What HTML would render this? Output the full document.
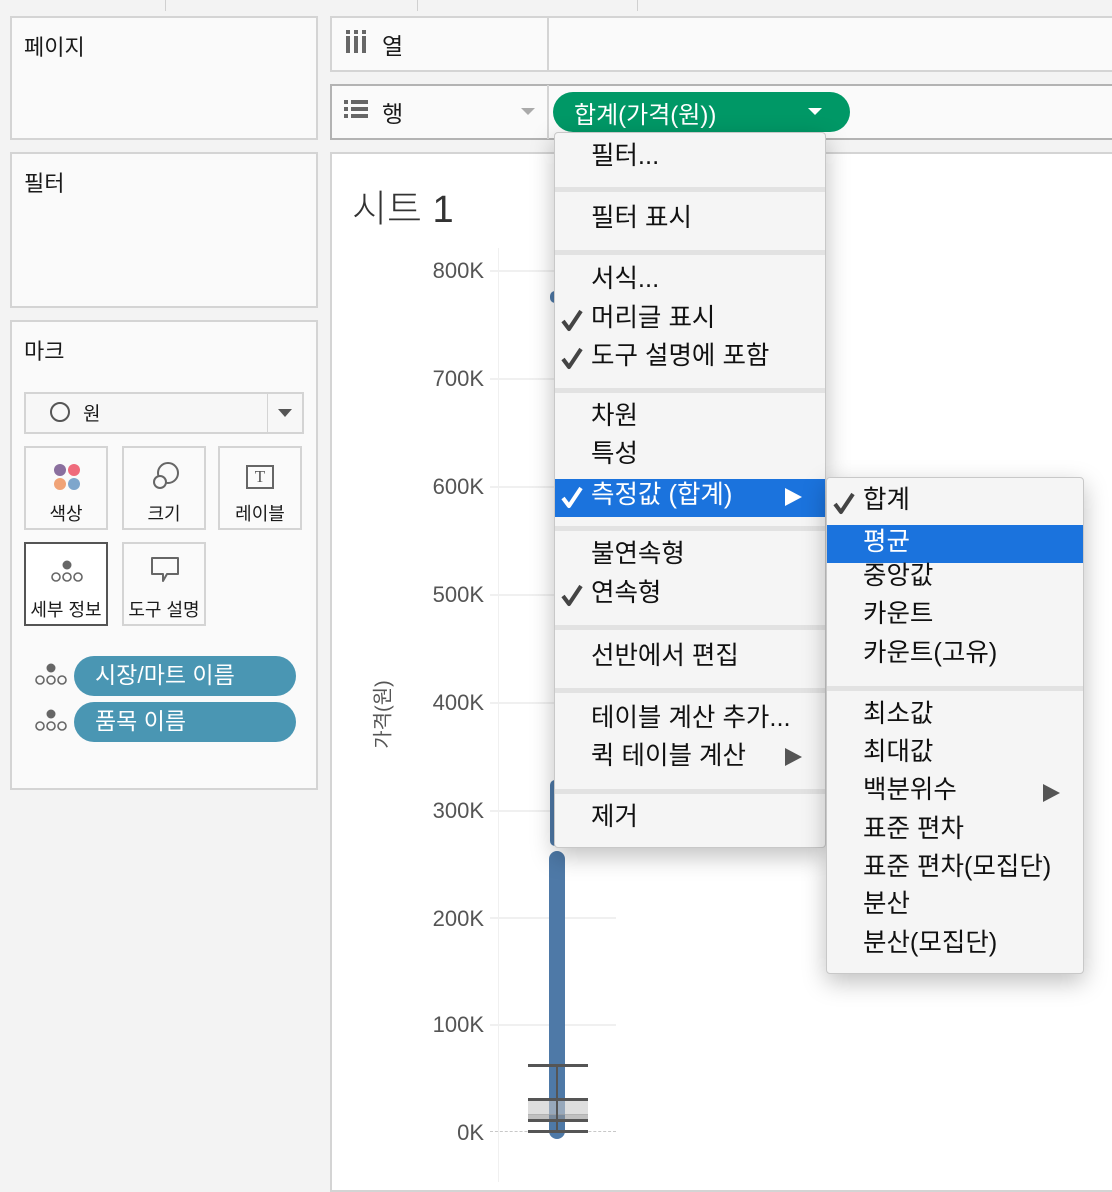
<!DOCTYPE html>
<html><head><meta charset="utf-8"><style>
*{margin:0;padding:0;box-sizing:border-box}
body{width:1112px;height:1182px;background:#f3f3f3;position:relative;overflow:hidden;font-family:"Liberation Sans","Noto Sans CJK KR",sans-serif;color:#1a1a1a}
.a{position:absolute}
.panel{position:absolute;background:#fafafa;border:2px solid #d4d4d4}
.t{position:absolute;white-space:nowrap}
.mi{position:absolute;left:36px;height:38px;line-height:38px;font-size:25.5px;white-space:nowrap;color:#111}
.ck{position:absolute;left:5px;width:24px;height:26px}
.sep{position:absolute;left:0;right:0;height:5px;background:#e2e2e2}
.ax{position:absolute;width:84px;text-align:right;left:400px;font-size:22px;color:#555;height:24px;line-height:24px}
.gl{position:absolute;left:490px;width:126px;height:2px;background:#f0f0f0}
.card{position:absolute;width:84px;height:84px;border:2px solid #d4d4d4;background:#fafafa;text-align:center;font-size:18px}
.card span{position:absolute;left:0;right:0;top:52px}
.pill{position:absolute;left:74px;width:222px;height:40px;border-radius:20px;background:#4a96b3;color:#fff;font-size:23px;line-height:38px;padding-left:21px}
</style></head><body>
<div class="a" style="left:165px;top:0;width:1px;height:11px;background:#d0d0d0"></div>
<div class="a" style="left:417px;top:0;width:1px;height:11px;background:#d0d0d0"></div>
<div class="a" style="left:637px;top:0;width:1px;height:11px;background:#d0d0d0"></div>

<div class="panel" style="left:10px;top:16px;width:308px;height:124px"></div>
<div class="t" style="left:24px;top:30px;font-size:22px">페이지</div>
<div class="panel" style="left:10px;top:152px;width:308px;height:156px"></div>
<div class="t" style="left:24px;top:166px;font-size:22px">필터</div>
<div class="panel" style="left:10px;top:320px;width:308px;height:470px"></div>
<div class="t" style="left:24px;top:334px;font-size:22px">마크</div>
<div class="a" style="left:24px;top:392px;width:280px;height:42px;border:2px solid #d4d4d4;background:#f7f7f7"></div>
<div class="a" style="left:267px;top:394px;width:1px;height:38px;background:#d4d4d4"></div>
<div class="a" style="left:50px;top:402px;width:20px;height:20px;border:2px solid #555;border-radius:50%"></div>
<div class="t" style="left:83px;top:399px;font-size:19px">원</div>
<div class="a" style="left:278px;top:409px;border-left:7px solid transparent;border-right:7px solid transparent;border-top:8px solid #555"></div>

<div class="card" style="left:24px;top:446px">
<div class="a" style="left:28px;top:16px;width:12px;height:12px;border-radius:50%;background:#8a6f9e"></div>
<div class="a" style="left:42px;top:16px;width:12px;height:12px;border-radius:50%;background:#ef6b7c"></div>
<div class="a" style="left:28px;top:30px;width:12px;height:12px;border-radius:50%;background:#f0a377"></div>
<div class="a" style="left:42px;top:30px;width:12px;height:12px;border-radius:50%;background:#7ea6cc"></div>
<span>색상</span></div>
<div class="card" style="left:122px;top:446px">
<svg class="a" style="left:26px;top:12px" width="32" height="32"><circle cx="18" cy="13" r="10" fill="none" stroke="#666" stroke-width="2"/><circle cx="10" cy="22" r="6" fill="#fafafa" stroke="#666" stroke-width="2"/></svg>
<span>크기</span></div>
<div class="card" style="left:218px;top:446px">
<div class="a" style="left:26px;top:17px;width:28px;height:24px;border:2px solid #666;font-family:'Liberation Serif',serif;font-size:17px;line-height:19px;color:#555">T</div>
<span>레이블</span></div>
<div class="card" style="left:24px;top:542px;border-color:#555;background:#fff">
<svg class="a" style="left:24px;top:16px" width="34" height="24"><circle cx="17" cy="5" r="4.5" fill="#666"/><circle cx="6" cy="17" r="4" fill="none" stroke="#666" stroke-width="1.6"/><circle cx="17" cy="17" r="4" fill="none" stroke="#666" stroke-width="1.6"/><circle cx="28" cy="17" r="4" fill="none" stroke="#666" stroke-width="1.6"/></svg>
<span>세부 정보</span></div>
<div class="card" style="left:122px;top:542px">
<svg class="a" style="left:26px;top:12px" width="32" height="30"><path d="M2 2H28V18H17L13 25V18H2Z" fill="none" stroke="#666" stroke-width="2" stroke-linejoin="round"/></svg>
<span>도구 설명</span></div>

<svg class="a" style="left:34px;top:663px" width="34" height="24"><circle cx="17" cy="5" r="4.5" fill="#666"/><circle cx="6" cy="17" r="4" fill="none" stroke="#666" stroke-width="1.6"/><circle cx="17" cy="17" r="4" fill="none" stroke="#666" stroke-width="1.6"/><circle cx="28" cy="17" r="4" fill="none" stroke="#666" stroke-width="1.6"/></svg>
<div class="pill" style="top:656px">시장/마트 이름</div>
<svg class="a" style="left:34px;top:709px" width="34" height="24"><circle cx="17" cy="5" r="4.5" fill="#666"/><circle cx="6" cy="17" r="4" fill="none" stroke="#666" stroke-width="1.6"/><circle cx="17" cy="17" r="4" fill="none" stroke="#666" stroke-width="1.6"/><circle cx="28" cy="17" r="4" fill="none" stroke="#666" stroke-width="1.6"/></svg>
<div class="pill" style="top:702px">품목 이름</div>

<div class="a" style="left:330px;top:16px;width:790px;height:56px;background:#fafafa;border:2px solid #d4d4d4"></div>
<div class="a" style="left:547px;top:17px;width:2px;height:54px;background:#d4d4d4"></div>
<svg class="a" style="left:345px;top:30px" width="24" height="24"><g fill="#666"><rect x="1" y="0" width="4" height="4"/><rect x="9" y="0" width="4" height="4"/><rect x="17" y="0" width="4" height="4"/><rect x="1" y="6" width="4" height="17"/><rect x="9" y="6" width="4" height="17"/><rect x="17" y="6" width="4" height="17"/></g></svg>
<div class="t" style="left:382px;top:27px;font-size:23px">열</div>

<div class="a" style="left:330px;top:84px;width:790px;height:56px;background:#fafafa;border:2px solid #b3b3b3"></div>
<div class="a" style="left:547px;top:85px;width:2px;height:54px;background:#d4d4d4"></div>
<svg class="a" style="left:344px;top:99px" width="26" height="22"><g fill="#666"><rect x="0" y="1" width="4" height="4"/><rect x="7" y="1" width="17" height="4"/><rect x="0" y="8" width="4" height="4"/><rect x="7" y="8" width="17" height="4"/><rect x="0" y="15" width="4" height="4"/><rect x="7" y="15" width="17" height="4"/></g></svg>
<div class="t" style="left:382px;top:95px;font-size:23px">행</div>
<div class="a" style="left:521px;top:108px;border-left:7px solid transparent;border-right:7px solid transparent;border-top:7px solid #aaa"></div>
<div class="a" style="left:553px;top:92px;width:297px;height:40px;border-radius:20px;background:#009866"></div>
<div class="t" style="left:574px;top:95px;font-size:24px;color:#fff">합계(가격(원))</div>
<div class="a" style="left:808px;top:108px;border-left:7px solid transparent;border-right:7px solid transparent;border-top:7px solid #fff"></div>

<div class="a" style="left:330px;top:152px;width:790px;height:1040px;background:#fff;border:2px solid #d4d4d4"></div>
<div class="t" style="left:352px;top:178px;font-size:38px;color:#333;font-weight:300">시트 1</div>
<div class="a" style="left:498px;top:248px;width:1px;height:934px;background:#f0f0f0"></div>
<div class="gl" style="top:270px"></div><div class="gl" style="top:378px"></div><div class="gl" style="top:486px"></div><div class="gl" style="top:594px"></div><div class="gl" style="top:702px"></div><div class="gl" style="top:810px"></div><div class="gl" style="top:917px"></div><div class="gl" style="top:1024px"></div>
<div class="a" style="left:490px;top:1131px;width:126px;border-top:1px dashed #c8c8c8"></div>
<div class="ax" style="top:259px">800K</div><div class="ax" style="top:367px">700K</div><div class="ax" style="top:475px">600K</div><div class="ax" style="top:583px">500K</div><div class="ax" style="top:691px">400K</div><div class="ax" style="top:799px">300K</div><div class="ax" style="top:907px">200K</div><div class="ax" style="top:1013px">100K</div><div class="ax" style="top:1121px">0K</div>
<div class="t" style="left:346px;top:700px;width:70px;font-size:20px;color:#555;transform:rotate(-90deg);text-align:center">가격(원)</div>
<div class="a" style="left:549px;top:851px;width:16px;height:288px;border-radius:8px;background:#4e79a7"></div>
<div class="a" style="left:550px;top:780px;width:10px;height:66px;border-radius:6px;background:#4e79a7"></div>
<div class="a" style="left:550px;top:291px;width:10px;height:12px;border-radius:6px;background:#4e79a7"></div>
<div class="a" style="left:528px;top:1099px;width:60px;height:16px;background:rgba(200,200,200,0.6)"></div>
<div class="a" style="left:528px;top:1114px;width:60px;height:6px;background:rgba(150,150,150,0.6)"></div>
<div class="a" style="left:528px;top:1064px;width:60px;height:3px;background:#555"></div>
<div class="a" style="left:528px;top:1098px;width:60px;height:3px;background:#555"></div>
<div class="a" style="left:528px;top:1119px;width:60px;height:3px;background:#555"></div>
<div class="a" style="left:528px;top:1130px;width:60px;height:3px;background:#555"></div>
<div class="a" style="left:556px;top:1066px;width:2px;height:66px;background:#555"></div>

<div class="a" style="left:554px;top:132px;width:272px;height:716px;background:#f5f5f5;border:1px solid #c8c8c8;border-radius:4px;box-shadow:0 8px 24px rgba(0,0,0,0.25)">
<div class="mi" style="top:4px">필터...</div>
<div class="sep" style="top:54px"></div>
<div class="mi" style="top:66px">필터 표시</div>
<div class="sep" style="top:117px"></div>
<div class="mi" style="top:127px">서식...</div>
<svg class="ck" style="top:174px"><path d="M3 14L9 22L21 4" fill="none" stroke="#444" stroke-width="4" stroke-linejoin="round"/></svg><div class="mi" style="top:166px">머리글 표시</div>
<svg class="ck" style="top:212px"><path d="M3 14L9 22L21 4" fill="none" stroke="#444" stroke-width="4" stroke-linejoin="round"/></svg><div class="mi" style="top:204px">도구 설명에 포함</div>
<div class="sep" style="top:255px"></div>
<div class="mi" style="top:264px">차원</div>
<div class="mi" style="top:302px">특성</div>
<div class="a" style="left:0;right:0;top:346px;height:38px;background:#1b73dd"></div>
<svg class="ck" style="top:351px"><path d="M3 14L9 22L21 4" fill="none" stroke="#fff" stroke-width="4" stroke-linejoin="round"/></svg><div class="mi" style="top:343px;color:#fff">측정값 (합계)</div>
<div class="a" style="left:230px;top:355px;border-top:9px solid transparent;border-bottom:9px solid transparent;border-left:17px solid #fff"></div>
<div class="sep" style="top:393px"></div>
<div class="mi" style="top:402px">불연속형</div>
<svg class="ck" style="top:449px"><path d="M3 14L9 22L21 4" fill="none" stroke="#444" stroke-width="4" stroke-linejoin="round"/></svg><div class="mi" style="top:441px">연속형</div>
<div class="sep" style="top:492px"></div>
<div class="mi" style="top:504px">선반에서 편집</div>
<div class="sep" style="top:555px"></div>
<div class="mi" style="top:566px">테이블 계산 추가...</div>
<div class="mi" style="top:604px">퀵 테이블 계산</div>
<div class="a" style="left:230px;top:615px;border-top:9px solid transparent;border-bottom:9px solid transparent;border-left:17px solid #555"></div>
<div class="sep" style="top:656px"></div>
<div class="mi" style="top:665px">제거</div>
</div>

<div class="a" style="left:826px;top:477px;width:258px;height:497px;background:#f5f5f5;border:1px solid #c8c8c8;border-radius:4px;box-shadow:0 8px 24px rgba(0,0,0,0.25)">
<svg class="ck" style="top:12px"><path d="M3 14L9 22L21 4" fill="none" stroke="#444" stroke-width="4" stroke-linejoin="round"/></svg><div class="mi" style="top:3px">합계</div>
<div class="a" style="left:0;right:0;top:47px;height:38px;background:#1b73dd"></div>
<div class="mi" style="top:45px;color:#fff">평균</div>
<div class="mi" style="top:79px">중앙값</div>
<div class="mi" style="top:117px">카운트</div>
<div class="mi" style="top:156px">카운트(고유)</div>
<div class="sep" style="top:208px"></div>
<div class="mi" style="top:217px">최소값</div>
<div class="mi" style="top:255px">최대값</div>
<div class="mi" style="top:293px">백분위수</div>
<div class="a" style="left:216px;top:306px;border-top:9px solid transparent;border-bottom:9px solid transparent;border-left:17px solid #555"></div>
<div class="mi" style="top:332px">표준 편차</div>
<div class="mi" style="top:370px">표준 편차(모집단)</div>
<div class="mi" style="top:407px">분산</div>
<div class="mi" style="top:446px">분산(모집단)</div>
</div>
</body></html>
